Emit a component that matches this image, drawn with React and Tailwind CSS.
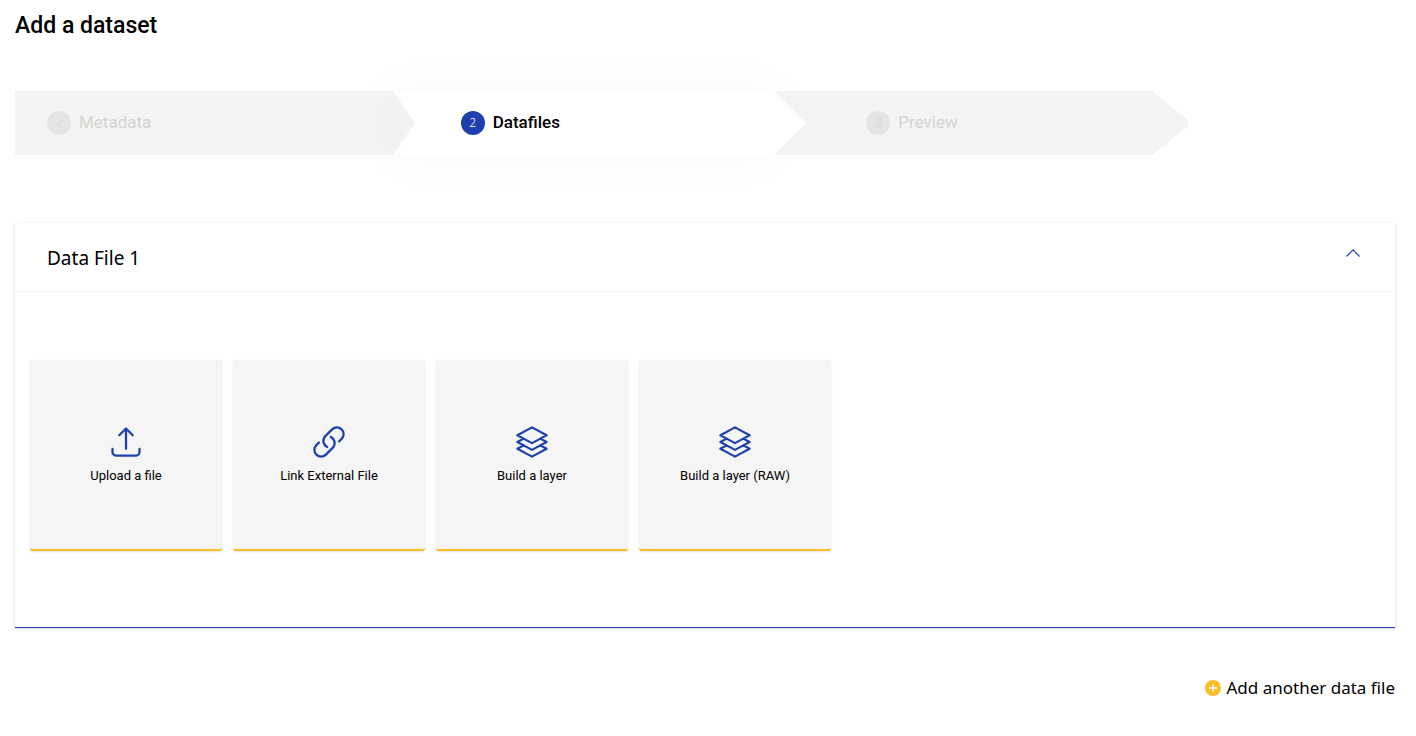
const icons = {
  upload:
    "M3 16.5v2.25A2.25 2.25 0 0 0 5.25 21h13.5A2.25 2.25 0 0 0 21 18.75V16.5m-13.5-9L12 3m0 0 4.5 4.5M12 3v13.5",
  link: "M13.19 8.688a4.5 4.5 0 0 1 1.242 7.244l-4.5 4.5a4.5 4.5 0 0 1-6.364-6.364l1.757-1.757m13.35-.622 1.757-1.757a4.5 4.5 0 0 0-6.364-6.364l-4.5 4.5a4.5 4.5 0 0 0 1.242 7.244",
  layers:
    "M6.429 9.75 2.25 12l4.179 2.25m0-4.5 5.571 3 5.571-3m-11.142 0L2.25 7.5 12 2.25l9.75 5.25-4.179 2.25m0 0L21.75 12l-4.179 2.25m0 0 4.179 2.25L12 21.75 2.25 16.5l4.179-2.25m11.142 0-5.571 3-5.571-3",
  check: "m4.5 12.75 6 6 9-13.5",
  chevron: "m4.5 15.75 7.5-7.5 7.5 7.5",
};

function Icon({ name, className }) {
  return (
    <svg
      className={className}
      viewBox="0 0 24 24"
      fill="none"
      stroke="currentColor"
      strokeWidth="1.5"
      strokeLinecap="round"
      strokeLinejoin="round"
      aria-hidden="true"
    >
      <path d={icons[name]} />
    </svg>
  );
}

const sources = [
  { label: "Upload a file", icon: "upload" },
  { label: "Link External File", icon: "link" },
  { label: "Build a layer", icon: "layers" },
  { label: "Build a layer (RAW)", icon: "layers" },
];

export default function App() {
  return (
    <main className="pt-2.5 pr-[21px] pb-8 pl-[15px] font-[Roboto,sans-serif] text-black">
      <h1 className="text-[23px] leading-8 font-medium">Add a dataset</h1>

      <ol className="mt-[49px] grid h-16 w-[85%] max-w-full grid-cols-[378fr_382fr_414fr] text-[17px]">
        <li className="flex items-center gap-2 bg-[#f4f4f4] pl-8 text-[#d6d3d1]">
          <span className="flex size-6 items-center justify-center rounded-full bg-[#e5e5e5]">
            <Icon name="check" className="size-3" />
          </span>
          Metadata
        </li>
        <li className="relative z-10 flex items-center bg-white shadow-[0_0_60px_rgba(0,0,0,0.03)]">
          <svg className="h-16 w-[22px] text-[#f2f2f2]" viewBox="0 0 22 64" aria-hidden="true">
            <path d="M0 0 22 32 0 64Z" fill="currentColor" />
          </svg>
          <span className="ml-[46px] flex items-center gap-2 font-medium">
            <span className="flex size-6 items-center justify-center rounded-full bg-[#1e40af] font-['Noto_Sans',sans-serif] text-xs font-light text-white">
              2
            </span>
            Datafiles
          </span>
          <svg className="absolute top-0 left-full h-16 w-8 text-white" viewBox="0 0 32 64" aria-hidden="true">
            <path d="M0 0 32 32 0 64Z" fill="currentColor" />
          </svg>
        </li>
        <li className="flex items-center gap-2 bg-[#f4f4f4] pl-[92px] text-[#d6d3d1] [clip-path:polygon(0_0,calc(100%-36px)_0,100%_29px,100%_35px,calc(100%-36px)_100%,0_100%)]">
          <span className="flex size-6 items-center justify-center rounded-full bg-[#e5e5e5] font-['Noto_Sans',sans-serif] text-xs font-light">
            2
          </span>
          Preview
        </li>
      </ol>

      <section className="mt-17 border-b border-[#1e40af] bg-white shadow-[0_1px_3px_rgba(0,0,0,0.16)]">
        <header className="flex h-[69px] items-center justify-between border-b border-[#f5f5f5] pr-[31px] pl-8">
          <h2 className="pt-0.5 font-['Noto_Sans',sans-serif] text-[19px] leading-7">Data File 1</h2>
          <button type="button" aria-label="Collapse Data File 1" className="mb-2 p-px text-[#1e40af]">
            <Icon name="chevron" className="size-5" />
          </button>
        </header>
        <div className="flex flex-wrap gap-[11px] px-[15px] pt-17 pb-19">
          {sources.map((source) => (
            <button
              key={source.label}
              type="button"
              className="flex h-[191px] w-48 flex-col items-center justify-center gap-1.5 rounded-[3px] border-b-2 border-[#fbbf24] bg-[#f5f5f5] text-[13px] leading-5 shadow-[0_1px_2px_rgba(0,0,0,0.12)]"
            >
              <Icon name={source.icon} className="size-9 text-[#1e40af]" />
              {source.label}
            </button>
          ))}
        </div>
      </section>

      <div className="mt-11 flex justify-end">
        <button
          type="button"
          className="flex items-center gap-1.5 font-['Noto_Sans',sans-serif] text-[17px] leading-8"
        >
          <svg className="size-4" viewBox="0 0 16 16" aria-hidden="true">
            <circle cx="8" cy="8" r="8" fill="#fbbf24" />
            <path d="M8 4.5v7M4.5 8h7" stroke="#fff" strokeWidth="1.5" strokeLinecap="round" />
          </svg>
          Add another data file
        </button>
      </div>
    </main>
  );
}
